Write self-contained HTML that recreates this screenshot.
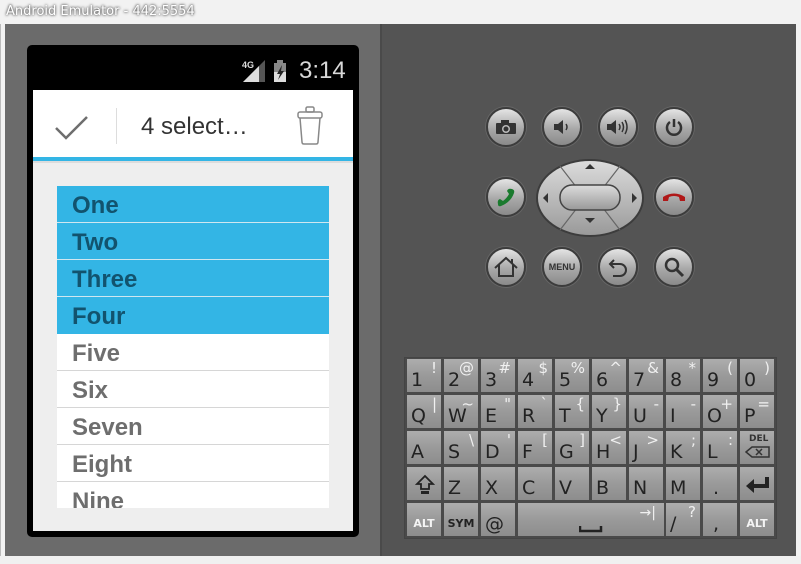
<!DOCTYPE html>
<html><head><meta charset="utf-8"><style>
*{margin:0;padding:0;box-sizing:border-box}
body{width:801px;height:564px;overflow:hidden;background:#f2f2f2;font-family:"Liberation Sans","DejaVu Sans",sans-serif;position:relative}
.a{position:absolute}
.title{left:6px;top:4px;font-size:13px;color:#fff;text-shadow:0 0 3px #666,0 0 2px #444;font-family:"DejaVu Sans",sans-serif}
.btn{position:absolute;width:40px;height:40px;border-radius:50%;background:linear-gradient(#e4e4e4,#a8a8a8 55%,#8a8a8a);border:2px solid #3c3c3c;box-shadow:0 0 0 1px #666;display:flex;align-items:center;justify-content:center}
.k{position:absolute;width:36px;height:35px;background:linear-gradient(#adadad,#9a9a9a 50%,#8d8d8d);border:1px solid #4a4a4a;color:#222;font-family:"DejaVu Sans",sans-serif}
.k .m{position:absolute;left:4px;bottom:2px;font-size:19px;line-height:19px}
.k .s{position:absolute;right:4px;top:2px;font-size:15px;color:#f0f0f0;line-height:15px}
.k .b{position:absolute;left:0;right:0;bottom:6px;text-align:center;font-size:11px;font-weight:bold;color:#f4f4f4}
.row{position:absolute;left:57px;width:272px;height:36px;font-size:24px;font-weight:bold;padding-left:15px;line-height:40px;border-bottom:1px solid #d6d6d6}
.sel{background:#33b5e5;color:#12536e;border-bottom-color:#cfe7f0}
.un{background:#fff;color:#6e6e6e}
</style></head><body>
<div class="a title">Android Emulator - 442:5554</div>
<div class="a" style="left:0;top:24px;width:801px;height:540px;background:#f2f2f2;border-left:1px solid #bbb"></div>
<div class="a" style="left:5px;top:24px;width:376px;height:532px;background:#6b6b6b"></div>
<div class="a" style="left:380px;top:24px;width:2px;height:532px;background:#4a4a4a"></div>
<div class="a" style="left:382px;top:24px;width:414px;height:532px;background:#545454"></div>
<div class="a" style="left:0;top:556px;width:801px;height:8px;background:#f0f0f0"></div>

<div class="a" style="left:27px;top:45px;width:332px;height:492px;background:#000;border-radius:5px"></div>
<div class="a" style="left:33px;top:90px;width:320px;height:441px;background:#eeeeee"></div>
<div class="a" style="left:33px;top:90px;width:320px;height:67px;background:#fff"></div>
<div class="a" style="left:33px;top:157px;width:320px;height:4px;background:#33b5e5"></div>
<div class="a" style="left:33px;top:161px;width:320px;height:2px;background:#dcdcdc"></div>
<div class="a" style="left:299px;top:57px;font-size:24px;color:#d8d8d8">3:14</div>
<svg class="a" style="left:240px;top:57px" width="56" height="26"><text x="2" y="11" font-size="9" font-weight="bold" fill="#ddd" font-family="Liberation Sans">4G</text><polygon points="3,25 25,3 25,25" fill="#555"/><polygon points="3,25 19,9 19,25" fill="#ddd"/><rect x="34" y="6" width="12" height="19" fill="#888"/><rect x="37" y="3" width="6" height="3" fill="#888"/><rect x="34" y="15" width="12" height="10" fill="#ddd"/><polygon points="42,8 37,17 40,17 38,23 44,14 41,14" fill="#222"/></svg>
<svg class="a" style="left:54px;top:114px" width="36" height="28"><polyline points="2,14 12,24 33,3" fill="none" stroke="#6e6e6e" stroke-width="2.5"/></svg>
<div class="a" style="left:116px;top:108px;width:1px;height:36px;background:#ddd"></div>
<div class="a" style="left:141px;top:113px;font-size:24px;color:#333">4 select…</div>
<svg class="a" style="left:295px;top:105px" width="32" height="42"><rect x="11" y="2" width="8" height="5" rx="1.5" fill="none" stroke="#888" stroke-width="1.5"/><rect x="3" y="7" width="24" height="6" rx="2" fill="none" stroke="#888" stroke-width="1.5"/><path d="M5 13 L7 37 Q7 39 9 39 L21 39 Q23 39 23 37 L25 13" fill="none" stroke="#888" stroke-width="1.5"/></svg>

<div class="row sel" style="top:186px;height:37px">One</div>
<div class="row sel" style="top:223px;height:37px">Two</div>
<div class="row sel" style="top:260px;height:37px">Three</div>
<div class="row sel" style="top:297px;height:37px;border-bottom:none">Four</div>
<div class="row un" style="top:334px;height:37px">Five</div>
<div class="row un" style="top:371px;height:37px">Six</div>
<div class="row un" style="top:408px;height:37px">Seven</div>
<div class="row un" style="top:445px;height:37px">Eight</div>
<div class="row un" style="top:482px;height:26px;overflow:hidden;border:none">Nine</div>

<div class="btn" style="left:486px;top:107px"><svg width="22" height="16"><rect x="1" y="4" width="20" height="11" rx="1" fill="#333"/><rect x="6" y="1" width="8" height="4" fill="#333"/><circle cx="11" cy="10" r="4" fill="#bbb"/><circle cx="11" cy="10" r="2.5" fill="#333"/></svg></div>
<div class="btn" style="left:542px;top:107px"><svg width="20" height="16"><polygon points="2,5 6,5 11,1 11,15 6,11 2,11" fill="#333"/><path d="M14 5 Q16 8 14 11" stroke="#333" stroke-width="1.5" fill="none"/></svg></div>
<div class="btn" style="left:598px;top:107px"><svg width="26" height="18"><polygon points="2,6 6,6 11,2 11,16 6,12 2,12" fill="#333"/><path d="M14 6 Q16 9 14 12 M17 4 Q20 9 17 14 M20 2 Q24 9 20 16" stroke="#333" stroke-width="1.5" fill="none"/></svg></div>
<div class="btn" style="left:654px;top:107px"><svg width="20" height="20"><path d="M6 5 A7 7 0 1 0 14 5" stroke="#333" stroke-width="2.5" fill="none"/><line x1="10" y1="2" x2="10" y2="10" stroke="#333" stroke-width="2.5"/></svg></div>
<div class="btn" style="left:486px;top:177px"><svg width="22" height="22"><path d="M3 18 Q2 14 5 13 L8 15 Q12 12 14 8 L12 5 Q13 2 17 3 Q20 4 19 7 Q16 16 6 20 Q3 21 3 18Z" fill="#1a7a2e"/></svg></div>
<div class="btn" style="left:654px;top:177px"><svg width="26" height="12"><path d="M2 10 L2 6 Q13 -1 24 6 L24 10 L19 10 L18 6 Q13 4 8 6 L7 10Z" fill="#b01818"/></svg></div>
<div class="btn" style="left:486px;top:247px"><svg width="26" height="22"><path d="M2 12 L13 2 L24 12 M6 9 L6 20 L20 20 L20 9 M19 3 L19 7" stroke="#333" stroke-width="2" fill="none"/></svg></div>
<div class="btn" style="left:542px;top:247px"><span style="font-size:9px;font-weight:bold;color:#333">MENU</span></div>
<div class="btn" style="left:598px;top:247px"><svg width="22" height="22"><path d="M7 4 L3 8 L7 12 M3 8 L13 8 A6 6 0 0 1 13 20 L6 20" stroke="#333" stroke-width="2" fill="none"/></svg></div>
<div class="btn" style="left:654px;top:247px"><svg width="22" height="22"><circle cx="9" cy="9" r="6" stroke="#333" stroke-width="2.5" fill="none"/><line x1="13" y1="13" x2="20" y2="20" stroke="#333" stroke-width="3"/></svg></div>

<svg class="a" style="left:535px;top:158px" width="110" height="80"><defs><linearGradient id="g" x1="0" y1="0" x2="0" y2="1"><stop offset="0" stop-color="#dcdcdc"/><stop offset="1" stop-color="#999"/></linearGradient></defs>
<ellipse cx="55" cy="40" rx="53" ry="38" fill="url(#g)" stroke="#3c3c3c" stroke-width="2"/>
<path d="M25 8 L42 30 M85 8 L68 30 M25 72 L42 50 M85 72 L68 50" stroke="#666" stroke-width="1.2"/>
<rect x="25" y="27" width="60" height="25" rx="12" fill="url(#g)" stroke="#444" stroke-width="1.5"/>
<polygon points="55,6 50,11 60,11" fill="#333"/><polygon points="55,65 50,60 60,60" fill="#333"/>
<polygon points="8,40 13,35 13,45" fill="#333"/><polygon points="102,40 97,35 97,45" fill="#333"/></svg>

<div class="a" style="left:404px;top:357px;width:373px;height:182px;background:#4a4a4a;border:1px solid #444"></div>
<div class="k" style="left:406px;top:358px"><span class="m">1</span><span class="s">!</span></div>
<div class="k" style="left:443px;top:358px"><span class="m">2</span><span class="s">@</span></div>
<div class="k" style="left:480px;top:358px"><span class="m">3</span><span class="s">#</span></div>
<div class="k" style="left:517px;top:358px"><span class="m">4</span><span class="s">$</span></div>
<div class="k" style="left:554px;top:358px"><span class="m">5</span><span class="s">%</span></div>
<div class="k" style="left:591px;top:358px"><span class="m">6</span><span class="s">^</span></div>
<div class="k" style="left:628px;top:358px"><span class="m">7</span><span class="s">&amp;</span></div>
<div class="k" style="left:665px;top:358px"><span class="m">8</span><span class="s">*</span></div>
<div class="k" style="left:702px;top:358px"><span class="m">9</span><span class="s">(</span></div>
<div class="k" style="left:739px;top:358px"><span class="m">0</span><span class="s">)</span></div>

<div class="k" style="left:406px;top:394px"><span class="m">Q</span><span class="s">|</span></div>
<div class="k" style="left:443px;top:394px"><span class="m">W</span><span class="s">~</span></div>
<div class="k" style="left:480px;top:394px"><span class="m">E</span><span class="s">"</span></div>
<div class="k" style="left:517px;top:394px"><span class="m">R</span><span class="s">`</span></div>
<div class="k" style="left:554px;top:394px"><span class="m">T</span><span class="s">{</span></div>
<div class="k" style="left:591px;top:394px"><span class="m">Y</span><span class="s">}</span></div>
<div class="k" style="left:628px;top:394px"><span class="m">U</span><span class="s">-</span></div>
<div class="k" style="left:665px;top:394px"><span class="m">I</span><span class="s">-</span></div>
<div class="k" style="left:702px;top:394px"><span class="m">O</span><span class="s">+</span></div>
<div class="k" style="left:739px;top:394px"><span class="m">P</span><span class="s">=</span></div>

<div class="k" style="left:406px;top:430px"><span class="m">A</span></div>
<div class="k" style="left:443px;top:430px"><span class="m">S</span><span class="s">\</span></div>
<div class="k" style="left:480px;top:430px"><span class="m">D</span><span class="s">'</span></div>
<div class="k" style="left:517px;top:430px"><span class="m">F</span><span class="s">[</span></div>
<div class="k" style="left:554px;top:430px"><span class="m">G</span><span class="s">]</span></div>
<div class="k" style="left:591px;top:430px"><span class="m">H</span><span class="s">&lt;</span></div>
<div class="k" style="left:628px;top:430px"><span class="m">J</span><span class="s">&gt;</span></div>
<div class="k" style="left:665px;top:430px"><span class="m">K</span><span class="s">;</span></div>
<div class="k" style="left:702px;top:430px"><span class="m">L</span><span class="s">:</span></div>
<div class="k" style="left:739px;top:430px"><span style="position:absolute;left:9px;top:3px;font-size:9px;font-weight:bold;color:#333">DEL</span><svg style="position:absolute;left:5px;top:15px" width="26" height="13"><path d="M1 6 L7 1 L24 1 L24 11 L7 11Z" fill="none" stroke="#333" stroke-width="1.5"/><path d="M11 3 L17 9 M17 3 L11 9" stroke="#333" stroke-width="1.5"/></svg></div>

<div class="k" style="left:406px;top:466px"><svg style="position:absolute;left:8px;top:7px" width="20" height="22"><path d="M10 2 L2 10 L6 10 L6 15 L14 15 L14 10 L18 10Z" fill="none" stroke="#222" stroke-width="1.8"/><rect x="6" y="17" width="8" height="3" fill="#222"/></svg></div>
<div class="k" style="left:443px;top:466px"><span class="m">Z</span></div>
<div class="k" style="left:480px;top:466px"><span class="m">X</span></div>
<div class="k" style="left:517px;top:466px"><span class="m">C</span></div>
<div class="k" style="left:554px;top:466px"><span class="m">V</span></div>
<div class="k" style="left:591px;top:466px"><span class="m">B</span></div>
<div class="k" style="left:628px;top:466px"><span class="m">N</span></div>
<div class="k" style="left:665px;top:466px"><span class="m">M</span></div>
<div class="k" style="left:702px;top:466px"><span class="m" style="left:10px">.</span></div>
<div class="k" style="left:739px;top:466px"><svg style="position:absolute;left:5px;top:9px" width="26" height="18"><path d="M22 1 L22 10 L8 10" fill="none" stroke="#222" stroke-width="4"/><polygon points="1,10 9,3 9,17" fill="#222"/></svg></div>

<div class="k" style="left:406px;top:502px"><span class="b">ALT</span></div>
<div class="k" style="left:443px;top:502px"><span class="b" style="color:#222">SYM</span></div>
<div class="k" style="left:480px;top:502px"><span class="m">@</span></div>
<div class="k" style="left:517px;top:502px;width:148px"><svg style="position:absolute;left:61px;top:22px" width="24" height="8"><path d="M1 1 L1 6 L22 6 L22 1" fill="none" stroke="#222" stroke-width="2.5"/></svg><span style="position:absolute;right:8px;top:2px;color:#f0f0f0;font-size:14px">→|</span></div>
<div class="k" style="left:665px;top:502px"><span class="m">/</span><span class="s">?</span></div>
<div class="k" style="left:702px;top:502px"><span class="m" style="left:10px">,</span></div>
<div class="k" style="left:739px;top:502px"><span class="b">ALT</span></div>
</body></html>
